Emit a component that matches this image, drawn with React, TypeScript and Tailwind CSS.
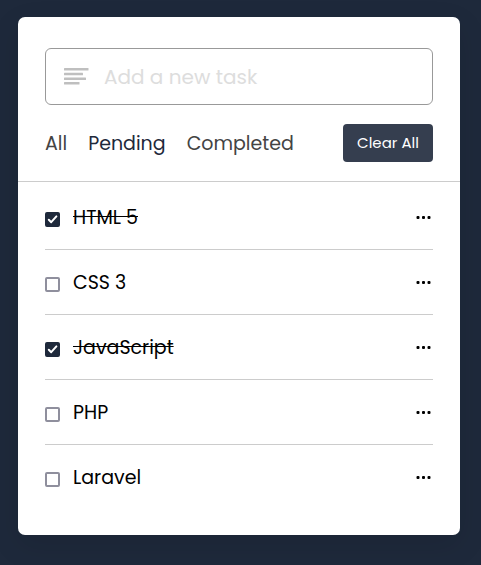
import { useState } from "react";

type Task = { id: string; name: string; done: boolean };

const initialTasks: Task[] = [
  { id: "html", name: "HTML 5", done: true },
  { id: "css", name: "CSS 3", done: false },
  { id: "js", name: "JavaScript", done: true },
  { id: "php", name: "PHP", done: false },
  { id: "laravel", name: "Laravel", done: false },
];

const filters = ["All", "Pending", "Completed"];

function TaskRow({ task, onToggle }: { task: Task; onToggle: () => void }) {
  return (
    <li className="flex h-[65px] items-center justify-between border-b border-[#cccccc] last:h-16 last:border-b-0">
      <label htmlFor={task.id} className="flex cursor-pointer items-center gap-[13px]">
        <span className="grid pt-1">
          <input
            id={task.id}
            type="checkbox"
            checked={task.done}
            onChange={onToggle}
            className="peer col-start-1 row-start-1 size-[15px] appearance-none rounded-xs border-2 border-[#8f8f9d] bg-white checked:border-[#1e293b] checked:bg-[#1e293b]"
          />
          <svg
            viewBox="0 0 15 15"
            className="pointer-events-none invisible col-start-1 row-start-1 size-[15px] peer-checked:visible"
            fill="none"
            stroke="white"
            strokeWidth="2"
            strokeLinecap="round"
            strokeLinejoin="round"
          >
            <path d="M3.8 7.8 6.2 10.2 11.4 4.4" />
          </svg>
        </span>
        <span
          className={
            task.done
              ? "pt-0.5 text-[19px] leading-7 text-black line-through"
              : "pt-0.5 text-[19px] leading-7 text-black"
          }
        >
          {task.name}
        </span>
      </label>
      <button type="button" aria-label={`Options for ${task.name}`} className="flex h-6 items-center pr-0.5">
        <svg width="15" height="3" viewBox="0 0 15 3" fill="black">
          <rect x="0.5" y="0" width="3" height="3" rx="1" />
          <rect x="6" y="0" width="3" height="3" rx="1" />
          <rect x="11.5" y="0" width="3" height="3" rx="1" />
        </svg>
      </button>
    </li>
  );
}

export default function App() {
  const [tasks, setTasks] = useState(initialTasks);
  const [active, setActive] = useState("Pending");

  return (
    <main className="min-h-screen bg-[#1e293b] pt-[17px] pr-[21px] pb-[30px] pl-[18px] font-['Poppins','Inter',sans-serif]">
      <section className="rounded-[7px] bg-white shadow-[0_10px_30px_rgba(0,0,0,0.1)]">
        <div className="px-[27px] pt-[31px]">
          <label
            htmlFor="new-task"
            className="flex h-[57px] items-center gap-[15px] rounded-md border border-[#999999] pr-4 pl-[18px]"
          >
            <svg width="25" height="17" viewBox="0 0 25 17" fill="#bfbfbf" className="shrink-0">
              <rect y="0" width="24.5" height="2.5" rx="0.5" />
              <rect y="4.7" width="19" height="2.5" rx="0.5" />
              <rect y="9.4" width="22" height="2.5" rx="0.5" />
              <rect y="14.1" width="15.5" height="2.5" rx="0.5" />
            </svg>
            <input
              id="new-task"
              type="text"
              placeholder="Add a new task"
              className="min-w-0 flex-1 bg-transparent text-xl text-black outline-none placeholder:text-[#dddddd]"
            />
          </label>
        </div>
        <div className="flex items-center justify-between border-b border-[#cccccc] px-[27px] py-[19px]">
          <div className="flex gap-[21px]">
            {filters.map((name) => (
              <button
                key={name}
                type="button"
                onClick={() => setActive(name)}
                className={
                  name === active
                    ? "pt-0.5 text-[19px] leading-7 text-[#1e293b]"
                    : "pt-0.5 text-[19px] leading-7 text-[#444444]"
                }
              >
                {name}
              </button>
            ))}
          </div>
          <button
            type="button"
            onClick={() => setTasks([])}
            className="flex h-[38px] w-[90px] items-center justify-center rounded-sm bg-[#353e4f] text-[15px] text-white"
          >
            Clear All
          </button>
        </div>
        <ul className="px-[27px] pt-[3px] pb-[26px]">
          {tasks.map((task) => (
            <TaskRow
              key={task.id}
              task={task}
              onToggle={() =>
                setTasks(tasks.map((t) => (t.id === task.id ? { ...t, done: !t.done } : t)))
              }
            />
          ))}
        </ul>
      </section>
    </main>
  );
}
